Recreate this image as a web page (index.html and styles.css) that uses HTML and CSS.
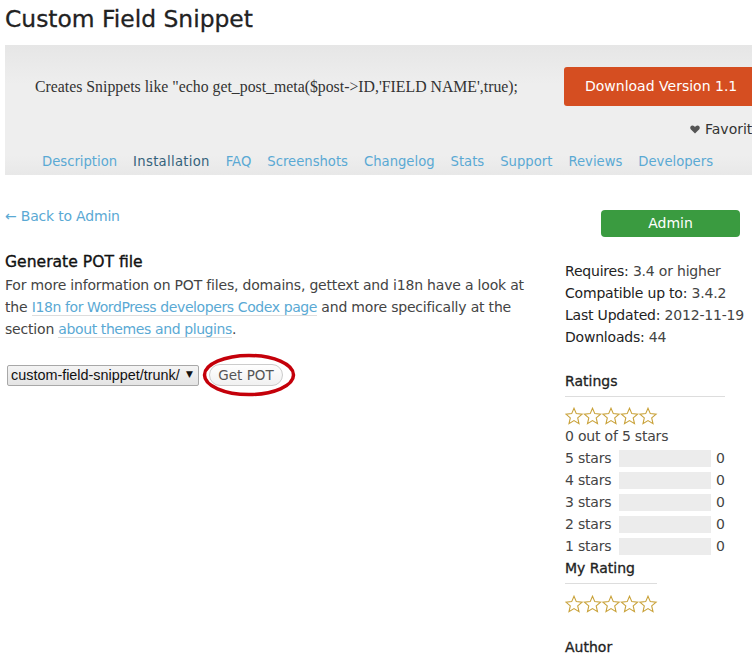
FILE: index.html
```html
<!DOCTYPE html>
<html>
<head>
<meta charset="utf-8">
<link rel="stylesheet" href="styles.css">
</head>
<body>
<div class="page">
  <h1 class="title">Custom Field Snippet</h1>
  <div class="banner">
    <div class="banner-top">
      <p class="desc">Creates Snippets like "echo get_post_meta($post-&gt;ID,'FIELD NAME',true);</p>
      <a class="download">Download Version 1.1</a>
    </div>
    <div class="fav"><svg class="heart" width="10" height="9" viewBox="0 0 11 10"><path d="M5.5 9.5 L1 5 C-0.5 3.5 0.2 0.6 2.6 0.6 C4 0.6 5 1.6 5.5 2.4 C6 1.6 7 0.6 8.4 0.6 C10.8 0.6 11.5 3.5 10 5 Z" fill="#555"/></svg>Favorites</div>
    <nav class="tabs">
      <a class="tab">Description</a>
      <a class="tab current">Installation</a>
      <a class="tab">FAQ</a>
      <a class="tab">Screenshots</a>
      <a class="tab">Changelog</a>
      <a class="tab">Stats</a>
      <a class="tab">Support</a>
      <a class="tab">Reviews</a>
      <a class="tab">Developers</a>
    </nav>
  </div>
  <div class="main">
    <div class="content">
      <a class="back">← Back to Admin</a>
      <h2 class="section-title">Generate POT file</h2>
      <p class="info">For more information on POT files, domains, gettext and i18n have a look at the <a class="ul">I18n for WordPress developers Codex page</a> and more specifically at the section <a class="ul">about themes and plugins</a>.</p>
      <div class="form">
        <span class="sel-wrap">
          <select class="sel"><option>custom-field-snippet/trunk/</option></select>
          <span class="arrow">▼</span>
        </span>
        <span class="btn-wrap">
          <button class="getpot">Get POT</button>
          <svg class="ring" width="96" height="46" viewBox="0 0 96 46"><ellipse cx="47" cy="22" rx="44.5" ry="19.5" fill="none" stroke="#c4000a" stroke-width="3.5"/></svg>
        </span>
      </div>
    </div>
    <aside class="sidebar">
      <a class="admin">Admin</a>
      <ul class="meta">
        <li><b>Requires:</b> 3.4 or higher</li>
        <li><b>Compatible up to:</b> 3.4.2</li>
        <li><b>Last Updated:</b> 2012-11-19</li>
        <li><b>Downloads:</b> 44</li>
      </ul>
      <h3 class="side-title wide">Ratings</h3>
      <svg class="stars top" width="94" height="19" viewBox="0 0 94 19">
        <g fill="none" stroke="#c9a23a" stroke-width="1.1" stroke-linejoin="miter">
          <path id="st" d="M9 1.2 L11.3 6.6 L17.1 7.1 L12.7 10.9 L14 16.6 L9 13.6 L4 16.6 L5.3 10.9 L0.9 7.1 L6.7 6.6 Z"/>
          <use href="#st" x="18.5"/>
          <use href="#st" x="37"/>
          <use href="#st" x="55.5"/>
          <use href="#st" x="74"/>
        </g>
      </svg>
      <div class="outof">0 out of 5 stars</div>
      <div class="counts">
        <div class="row"><span class="lbl">5 stars</span><span class="bar"></span><span class="num">0</span></div>
        <div class="row"><span class="lbl">4 stars</span><span class="bar"></span><span class="num">0</span></div>
        <div class="row"><span class="lbl">3 stars</span><span class="bar"></span><span class="num">0</span></div>
        <div class="row"><span class="lbl">2 stars</span><span class="bar"></span><span class="num">0</span></div>
        <div class="row"><span class="lbl">1 stars</span><span class="bar"></span><span class="num">0</span></div>
      </div>
      <h3 class="side-title narrow">My Rating</h3>
      <svg class="stars my" width="94" height="19" viewBox="0 0 94 19">
        <g fill="none" stroke="#c9a23a" stroke-width="1.1">
          <use href="#st" x="0"/>
          <use href="#st" x="18.5"/>
          <use href="#st" x="37"/>
          <use href="#st" x="55.5"/>
          <use href="#st" x="74"/>
        </g>
      </svg>
      <h3 class="side-title author">Author</h3>
    </aside>
  </div>
</div>
</body>
</html>
```
FILE: styles.css
```css
html, body {
  margin: 0;
  padding: 0;
  background: #fff;
  overflow: hidden;
}
body {
  font-family: "DejaVu Sans", sans-serif;
  font-size: 14px;
  color: #333;
}
.page {
  width: 820px;
  padding-left: 5px;
}
a { text-decoration: none; cursor: pointer; }
.title {
  margin: 0;
  height: 45px;
  font-size: 23.4px;
  font-weight: normal;
  line-height: 38px;
  color: #222;
  -webkit-text-stroke: 0.3px #222;
}
.banner {
  height: 130px;
  background: linear-gradient(#e6e6e6, #eeeeee 30%, #eeeeee 85%, #e8e8e8);
  display: flex;
  flex-direction: column;
}
.banner-top {
  display: flex;
  align-items: center;
  padding-top: 22px;
  height: 39px;
}
.desc {
  margin: 0 0 0 30px;
  width: 529px;
  font-family: "Liberation Serif", serif;
  font-size: 15.8px;
  color: #333;
}
.download {
  display: block;
  width: 210px;
  height: 39px;
  line-height: 39px;
  padding-left: 21px;
  box-sizing: border-box;
  background: #d54e21;
  border-radius: 3px;
  color: #fff;
  font-size: 14px;
}
.fav {
  margin-top: 15px;
  margin-left: 685px;
  height: 16px;
  line-height: 16px;
  color: #333;
  display: flex;
  align-items: center;
  gap: 5px;
}
.tabs {
  display: flex;
  gap: 16px;
  margin-left: 37px;
  margin-top: 17px;
  font-size: 13.2px;
}
.tab { color: #5aa9d4; }
.tab.current { color: #35627b; letter-spacing: 0.3px; }
.main {
  display: flex;
}
.content {
  width: 560px;
}
.back {
  display: block;
  margin-top: 32px;
  color: #5aa9d4;
  line-height: 18px;
  letter-spacing: -0.2px;
}
.section-title {
  margin: 27px 0 0;
  font-size: 15.6px;
  font-weight: normal;
  color: #111;
  line-height: 20px;
  -webkit-text-stroke: 0.35px #111;
}
.info {
  margin: 2px 0 0;
  line-height: 22px;
  width: 545px;
  color: #444;
  letter-spacing: -0.19px;
}
.ul {
  color: #5aa9d4;
  border-bottom: 1px solid #ddd;
  letter-spacing: -0.4px;
}
.form {
  margin-top: 24px;
  display: flex;
  align-items: center;
  gap: 10px;
  padding-left: 2px;
}
.sel-wrap {
  position: relative;
  display: inline-block;
}
.sel {
  appearance: none;
  -webkit-appearance: none;
  display: block;
  font-family: "Liberation Sans", sans-serif;
  font-size: 14.4px;
  width: 192px;
  height: 21px;
  padding: 0 0 0 3px;
  border: 1px solid #a8a8a8;
  border-radius: 2px;
  background: linear-gradient(#f4f4f4, #e4e4e4);
  color: #111;
}
.arrow {
  position: absolute;
  right: 6px;
  top: 4px;
  font-family: "DejaVu Sans", sans-serif;
  font-size: 9px;
  color: #111;
  pointer-events: none;
}
.btn-wrap {
  position: relative;
  display: inline-block;
}
.getpot {
  display: block;
  font-family: "DejaVu Sans", sans-serif;
  font-size: 13.5px;
  color: #555;
  width: 74px;
  height: 22px;
  padding: 0;
  border: 1px solid #ccc;
  border-radius: 11px;
  background: linear-gradient(#fefefe, #f1f1f1);
}
.ring {
  position: absolute;
  left: -7px;
  top: -11px;
  pointer-events: none;
}
.sidebar {
  width: 211px;
}
.admin {
  display: block;
  margin: 35px 0 0 36px;
  width: 139px;
  height: 27px;
  line-height: 27px;
  text-align: center;
  background: #3a9b40;
  border-radius: 4px;
  color: #fff;
}
.meta {
  list-style: none;
  margin: 23px 0 0;
  padding: 0;
  line-height: 22px;
  color: #444;
  letter-spacing: -0.2px;
}
.meta b { font-weight: normal; color: #222; }
.side-title {
  margin: 0;
  font-size: 14px;
  font-weight: normal;
  color: #222;
  line-height: 22px;
  border-bottom: 1px solid #ddd;
  padding-bottom: 4px;
  -webkit-text-stroke: 0.3px #222;
}
.side-title.wide { width: 160px; margin-top: 22px; }
.side-title.narrow { width: 92px; margin-top: 0; }
.side-title.author { border: 0; margin-top: 22px; }
.stars { display: block; }
.stars.top { margin-top: 10px; }
.stars.my { margin-top: 11px; }
.outof { line-height: 20px; color: #444; letter-spacing: -0.2px; }
.counts { display: flex; flex-direction: column; margin-top: 1px; }
.row {
  display: flex;
  align-items: center;
  height: 22px;
  color: #444;
  letter-spacing: -0.2px;
}
.lbl { width: 54px; }
.bar {
  width: 92px;
  height: 17px;
  background: #ececec;
}
.num { margin-left: 5px; }
```
